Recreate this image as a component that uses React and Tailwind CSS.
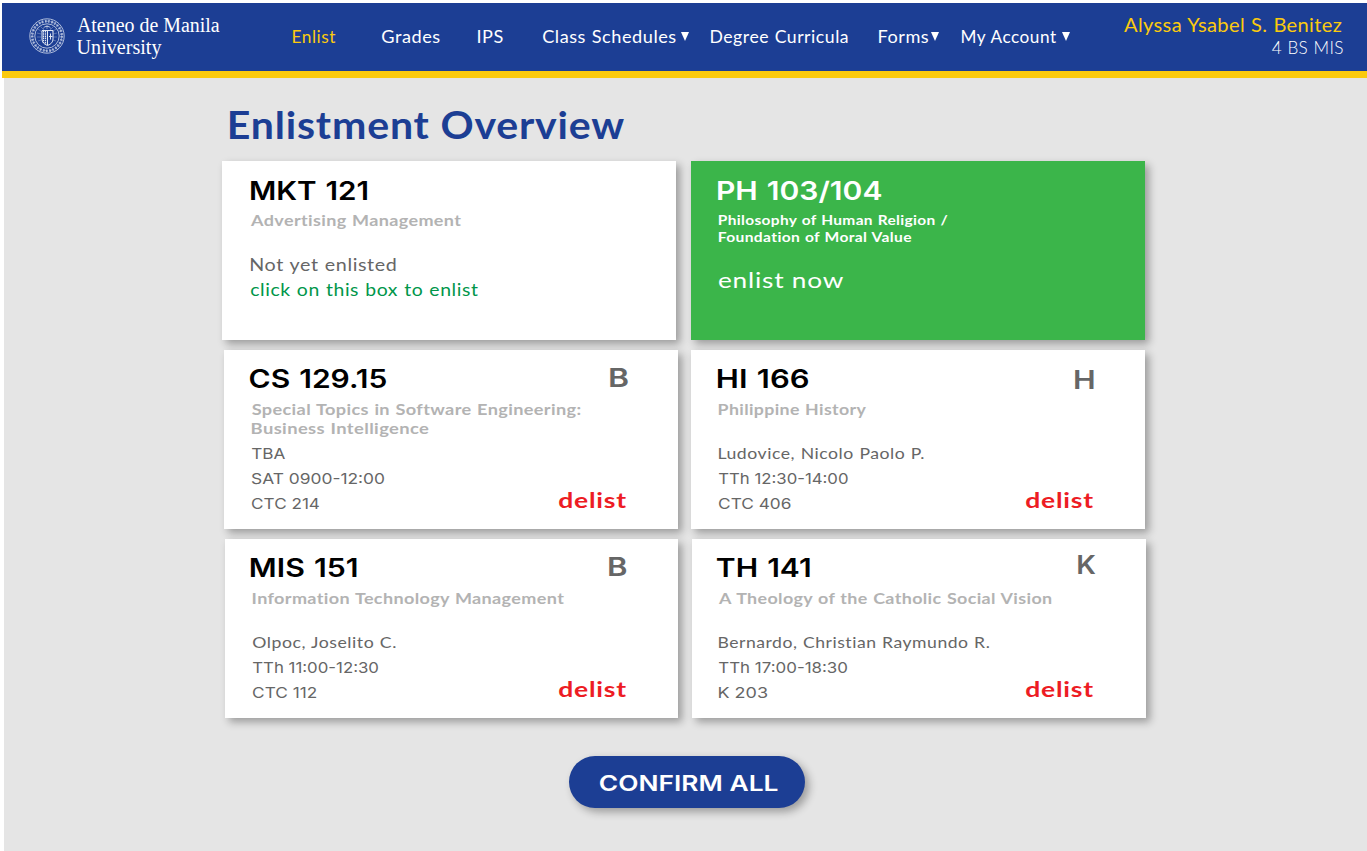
import { useLayoutEffect, useRef, useState } from "react";

const LATO = "font-[Lato,sans-serif]";
const INTER = "font-[Inter,sans-serif]";

/* Text stretched horizontally so that its glyphs span exactly `w` pixels. */
function Fit({ w, className = "", children }) {
  const ref = useRef(null);
  const [transform, setTransform] = useState("none");

  useLayoutEffect(() => {
    const ctx = document.createElement("canvas").getContext("2d");
    const cs = getComputedStyle(ref.current);
    const zoom = 10;
    ctx.font = `${cs.fontWeight} ${parseFloat(cs.fontSize) * zoom}px ${cs.fontFamily}`;
    ctx.letterSpacing = `${(parseFloat(cs.letterSpacing) || 0) * zoom}px`;
    ctx.wordSpacing = `${(parseFloat(cs.wordSpacing) || 0) * zoom}px`;
    const m = ctx.measureText(children);
    const left = m.actualBoundingBoxLeft / zoom;
    const scale = w / (left + m.actualBoundingBoxRight / zoom);
    setTransform(`translateX(${left * scale}px) scaleX(${scale})`);
  }, [w, children]);

  return (
    <span className={`block shrink-0 whitespace-nowrap ${className}`} style={{ width: w }}>
      <span ref={ref} className="inline-block origin-left" style={{ transform }}>
        {children}
      </span>
    </span>
  );
}

function Caret({ className = "" }) {
  return (
    <svg className={`h-[9px] w-[8px] shrink-0 ${className}`} viewBox="0 0 8 9">
      <path d="M0 0H8L4 9Z" fill="#fff" />
    </svg>
  );
}

function Seal() {
  return (
    <svg className="mt-[15px] h-9 w-9 shrink-0" viewBox="0 0 36 36" fill="none" stroke="#dfe5f2">
      <circle cx="18" cy="18" r="17.2" strokeWidth="1" opacity="0.75" />
      <circle cx="18" cy="18" r="14.8" strokeWidth="2.8" strokeDasharray="1.7 1.5" opacity="0.65" />
      <circle cx="18" cy="18" r="14.8" strokeWidth="1" strokeDasharray="3.6 2" opacity="0.5" />
      <circle cx="18" cy="18" r="12.2" strokeWidth="1" opacity="0.75" />
      <path
        d="M9 11l4 3M8 15l4 1M8 19h4M9 23l3-1M27 11l-4 3M28 15l-4 1M28 19h-4M27 23l-3-1M12 9l3 3M24 9l-3 3"
        strokeWidth="0.7"
        opacity="0.45"
      />
      <path d="M14 10.5q4-4.5 8 0M15.5 8.5h5M18 7v4" strokeWidth="1" opacity="0.5" />
      <path d="M13 12.5H24V21q0 4.5-5.5 6.5Q13 25.500 13 21Z" strokeWidth="1" />
      <path d="M14.500 13v12M16.500 13v13.500" strokeWidth="1.200" strokeDasharray="1.500 0.700" />
      <path d="M18.500 13v14M21.500 15.500v6M20 18.500h3.500" strokeWidth="1" />
    </svg>
  );
}

const NAV = [
  { label: "Enlist", w: 42.3, gap: "ml-[74px]", color: "text-[#fbca0e]" },
  { label: "Grades", w: 57.5, gap: "ml-[46.3px]" },
  { label: "IPS", w: 24.5, gap: "ml-[38.5px]" },
  { label: "Class Schedules", w: 132.5, gap: "ml-[41px]", caret: "ml-[5.500px]" },
  { label: "Degree Curricula", w: 136.5, gap: "ml-[22.3px]" },
  { label: "Forms", w: 49, gap: "ml-[31px]", caret: "ml-[3px]" },
  { label: "My Account", w: 95, gap: "ml-[23px]", caret: "ml-[5px]" },
];

function Header() {
  return (
    <header className="ml-[2px] flex h-[75px] border-b-[7px] border-[#fbca0e] bg-[#1c3e94] pl-[26.5px] text-white">
      <Seal />
      <div className="ml-3 w-[142.5px] shrink-0 pt-[11px] font-['Liberation_Serif',serif] text-[20px] leading-[22px]">
        <Fit w={142.5}>Ateneo de Manila</Fit>
        <Fit w={84.5}>University</Fit>
      </div>
      <nav
        className={`flex h-[67px] items-center ${LATO} text-[17px] leading-[24px] tracking-[0.03em] [word-spacing:0.03em]`}
      >
        {NAV.map((n) => (
          <div key={n.label} className={`flex items-center ${n.gap} ${n.color ?? ""}`}>
            <Fit w={n.w}>{n.label}</Fit>
            {n.caret && <Caret className={n.caret} />}
          </div>
        ))}
      </nav>
      <div
        className={`mr-[25px] ml-auto flex flex-col items-end pt-[10.5px] ${LATO} tracking-[0.02em] [word-spacing:0.03em]`}
      >
        <Fit w={218} className="text-[18.5px] leading-[23px] text-[#fbca0e]">
          Alyssa Ysabel S. Benitez
        </Fit>
        <Fit w={70.5} className="text-[17.5px] leading-[22px] font-light">
          4 BS MIS
        </Fit>
      </div>
    </header>
  );
}

function Card({ title, subs, children, letter, delist, tone = "bg-white", inset, titleInset }) {
  return (
    <article
      className={`flex h-[179px] w-[453.5px] shrink-0 shadow-[4px_4px_8px_rgba(0,0,0,0.32)] ${tone}`}
    >
      <div className={`w-[334.5px] shrink-0 pt-3 ${inset}`}>
        <h2
          className={`${titleInset} ${INTER} text-[25.6px] leading-[34px] font-semibold [word-spacing:0.05em]`}
        >
          <Fit w={title[1]}>{title[0]}</Fit>
        </h2>
        <div
          className={`mt-[4px] h-[41px] ${LATO} text-[15.4px] leading-[19px] font-bold tracking-[0.02em] text-[#b3b3b3] [word-spacing:0.04em]`}
        >
          {subs}
        </div>
        {children}
      </div>
      {letter && (
        <div className="flex flex-col">
          <Fit
            w={letter[1]}
            className={`${letter[2]} h-[34px] ${INTER} text-[26px] leading-[34px] font-semibold text-[#666]`}
          >
            {letter[0]}
          </Fit>
          <Fit
            w={67}
            className={`mt-auto mb-[14px] ${delist} ${LATO} text-[21.5px] leading-[30px] font-bold tracking-[0.03em] text-[#ed1c24]`}
          >
            delist
          </Fit>
        </div>
      )}
    </article>
  );
}

function Details({ teacher, time, room, allCaps }) {
  return (
    <div className={`${INTER} text-[15px] leading-[25px] text-[#666]`}>
      <Fit
        w={teacher[1]}
        className={allCaps ? "" : `${LATO} text-[15.4px] tracking-[0.03em] [word-spacing:0.03em]`}
      >
        {teacher[0]}
      </Fit>
      <Fit w={time[1]}>{time[0]}</Fit>
      <Fit w={room[1]}>{room[0]}</Fit>
    </div>
  );
}

export default function App() {
  return (
    <div className="h-[851px] w-[1367px] overflow-hidden bg-white pt-[3px]">
      <Header />
      <main className="ml-1 h-[773px] bg-[#e5e5e5] pt-[23px]">
        <h1
          className={`ml-[225.5px] ${LATO} text-[38.5px] leading-[47px] font-bold tracking-[0.02em] text-[#1c3e94]`}
        >
          <Fit w={394}>Enlistment Overview</Fit>
        </h1>

        <section className="mt-[13px] flex flex-col gap-[10px]">
          <div className="ml-[218px] flex gap-[15.5px]">
            <Card
              title={["MKT 121", 116]}
              inset="pl-[28.5px]"
              titleInset="pt-px -mb-px"
              subs={<Fit w={210}>Advertising Management</Fit>}
            >
              <div
                className={`pt-[0.4px] ${LATO} text-[17.3px] leading-[25px] tracking-[0.03em] [word-spacing:0.03em]`}
              >
                <Fit w={145} className="text-[#666]">
                  Not yet enlisted
                </Fit>
                <Fit w={227} className="text-[#00964a]">
                  click on this box to enlist
                </Fit>
              </div>
            </Card>
            <Card
              title={["PH 103/104", 163]}
              tone="bg-[#3bb54a] text-white"
              inset="pl-[27.5px]"
              titleInset="-ml-px pt-px -mb-px"
              subs={
                <div className="text-[14px] leading-[17px] text-white">
                  <Fit w={229}>Philosophy of Human Religion /</Fit>
                  <Fit w={193}>Foundation of Moral Value</Fit>
                </div>
              }
            >
              <Fit w={124} className={`mt-[13px] ${LATO} text-[22px] leading-[30px] tracking-[0.03em]`}>
                enlist now
              </Fit>
            </Card>
          </div>

          <div className="ml-[220px] flex gap-[13.5px]">
            <Card
              title={["CS 129.15", 136]}
              inset="pl-[27.5px]"
              titleInset="-ml-[1.5px]"
              letter={["B", 18, "ml-[51px] mt-[11px]"]}
              delist=""
              subs={
                <>
                  <Fit w={329}>Special Topics in Software Engineering:</Fit>
                  <Fit w={176.5}>Business Intelligence</Fit>
                </>
              }
            >
              <Details
                allCaps
                teacher={["TBA", 33]}
                time={["SAT 0900-12:00", 132]}
                room={["CTC 214", 67]}
              />
            </Card>
            <Card
              title={["HI 166", 90]}
              inset="pl-[28px]"
              titleInset="-ml-[1.5px]"
              letter={["H", 19, "ml-[49.5px] mt-[13px]"]}
              delist=""
              subs={<Fit w={147}>Philippine History</Fit>}
            >
              <Details
                teacher={["Ludovice, Nicolo Paolo P.", 204.5]}
                time={["TTh 12:30-14:00", 128.5]}
                room={["CTC 406", 71.5]}
              />
            </Card>
          </div>

          <div className="-mt-[0.5px] ml-[220.5px] flex gap-[14px]">
            <Card
              title={["MIS 151", 105.5]}
              inset="pl-[28px]"
              titleInset="-ml-[1.5px]"
              letter={["B", 17.5, "ml-[50px] mt-[11px]"]}
              delist=""
              subs={<Fit w={312}>Information Technology Management</Fit>}
            >
              <Details
                teacher={["Olpoc, Joselito C.", 143]}
                time={["TTh 11:00-12:30", 125]}
                room={["CTC 112", 63]}
              />
            </Card>
            <Card
              title={["TH 141", 92.5]}
              inset="pl-[27px]"
              titleInset="-ml-[2px]"
              letter={["K", 17.5, "ml-[51px] mt-[9px]"]}
              delist="-ml-[0.5px]"
              subs={<Fit w={335}>A Theology of the Catholic Social Vision</Fit>}
            >
              <Details
                teacher={["Bernardo, Christian Raymundo R.", 270]}
                time={["TTh 17:00-18:30", 128]}
                room={["K 203", 48]}
              />
            </Card>
          </div>
        </section>

        <button
          className={`mt-[38px] ml-[564.5px] flex h-[52px] w-[236.5px] items-center justify-center rounded-full bg-[#1c3e94] ${INTER} text-[21.6px] leading-[30px] font-semibold text-white shadow-[4px_4px_8px_rgba(0,0,0,0.32)]`}
        >
          <Fit w={177.5} className="mt-[2px] ml-[3px] text-left">
            CONFIRM ALL
          </Fit>
        </button>
      </main>
    </div>
  );
}
